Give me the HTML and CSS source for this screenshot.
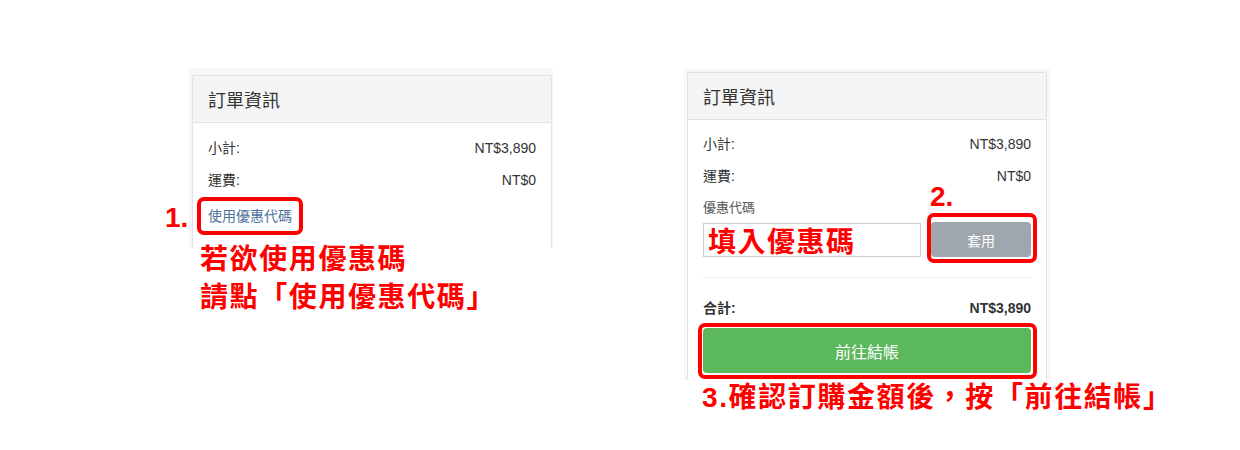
FILE: index.html
```html
<!DOCTYPE html>
<html lang="zh-Hant">
<head>
<meta charset="utf-8">
<title>訂單資訊</title>
<link rel="stylesheet" href="styles.css">
</head>
<body>
<div class="page">
  <div class="shot shot-left">
    <div class="frame frame-left">
      <div class="panel">
        <div class="panel-heading">訂單資訊</div>
        <div class="panel-body">
          <div class="row"><span>小計:</span><span>NT$3,890</span></div>
          <div class="row"><span>運費:</span><span>NT$0</span></div>
          <a class="coupon-link">使用優惠代碼</a>
        </div>
      </div>
    </div>
    <div class="note note-left">若欲使用優惠碼<br>請點「使用優惠代碼」</div>
    <span class="marker marker-1">1.</span>
    <div class="hl hl-1"></div>
  </div>

  <div class="shot shot-right">
    <div class="frame frame-right">
      <div class="panel">
        <div class="panel-heading">訂單資訊</div>
        <div class="panel-body">
          <div class="row"><span>小計:</span><span>NT$3,890</span></div>
          <div class="row"><span>運費:</span><span>NT$0</span></div>
          <div class="label">優惠代碼</div>
          <div class="coupon-row">
            <div class="input"><span class="input-hint">填入優惠碼</span></div>
            <button class="btn-apply">套用</button>
          </div>
          <div class="divider"></div>
          <div class="row total"><span>合計:</span><span>NT$3,890</span></div>
          <button class="btn-checkout">前往結帳</button>
        </div>
      </div>
    </div>
    <div class="note note-right">3.確認訂購金額後，按「前往結帳」</div>
    <span class="marker marker-2">2.</span>
    <div class="hl hl-2"></div>
    <div class="hl hl-3"></div>
  </div>
</div>
</body>
</html>
```

FILE: styles.css
```css
* { box-sizing: border-box; }

body {
  margin: 0;
  background: #ffffff;
  font-family: "Liberation Sans", "Noto Sans CJK TC", sans-serif;
  color: #333333;
}

.page {
  display: flex;
  align-items: flex-start;
  gap: 131px;
  padding: 68px 0 0 189px;
}

.shot {
  position: relative;
}

.shot-right {
  margin-top: 1px;
}

.frame {
  background: #f7f7f7;
  overflow: hidden;
}

.frame-left {
  width: 364px;
  height: 180px;
  padding: 7px 1px 0 3px;
}

.frame-right {
  width: 366px;
  height: 311px;
  padding: 3px 3px 0 3px;
}

.panel {
  width: 360px;
  background: #ffffff;
  border: 1px solid #e2e2e2;
  border-radius: 2px;
}

.frame-left .panel {
  min-height: 220px;
}

.panel-heading {
  height: 47px;
  display: flex;
  align-items: center;
  padding: 0 15px;
  background: #f5f5f5;
  border-bottom: 1px solid #e2e2e2;
  font-size: 18px;
  color: #333333;
}

.panel-body {
  padding: 15px 15px 20px;
  font-size: 14px;
}

.frame-right .panel-body {
  padding-top: 14px;
}

.row {
  display: flex;
  justify-content: space-between;
  line-height: 20px;
  margin-bottom: 12px;
}

.coupon-link {
  display: block;
  margin-top: 16px;
  line-height: 20px;
  color: #4d739c;
  font-size: 14px;
}

.label {
  margin-top: 0;
  line-height: 20px;
  color: #555555;
  font-size: 13px;
}

.coupon-row {
  display: flex;
  align-items: center;
  gap: 10px;
  margin-top: 4px;
}

.input {
  flex: 1;
  height: 34px;
  border: 1px solid #cccccc;
  display: flex;
  align-items: center;
  padding: 0 4px;
}

.input-hint {
  font-family: "Noto Sans CJK TC", sans-serif;
  font-weight: 700;
  font-size: 28px;
  letter-spacing: 1.5px;
  line-height: 1;
  color: #ff0000;
}

.btn-apply {
  width: 100px;
  height: 35px;
  border: none;
  border-radius: 4px;
  background: #9ea7ad;
  color: #ffffff;
  font-family: "Liberation Sans", "Noto Sans CJK TC", sans-serif;
  font-size: 14px;
}

.divider {
  height: 1px;
  background: #eeeeee;
  margin: 20px 0 20px;
}

.total {
  font-weight: 700;
  margin-bottom: 10px;
}

.btn-checkout {
  display: block;
  width: 100%;
  height: 45px;
  border: none;
  border-radius: 4px;
  background: #5cb85c;
  color: #ffffff;
  font-family: "Liberation Sans", "Noto Sans CJK TC", sans-serif;
  font-size: 16px;
}

.note {
  font-family: "Liberation Sans", "Noto Sans CJK TC", sans-serif;
  font-weight: 700;
  font-size: 28px;
  letter-spacing: 1.6px;
  color: #ff0000;
  white-space: nowrap;
}

.note-left {
  margin: -7px 0 0 11px;
  line-height: 38px;
}

.note-right {
  margin: 2px 0 0 18px;
  line-height: 32px;
}

.marker {
  position: absolute;
  font-family: "Liberation Sans", sans-serif;
  font-weight: 700;
  font-size: 28px;
  line-height: 28px;
  color: #ff0000;
}

.marker-1 { left: -24px; top: 136px; }
.marker-2 { left: 246px; top: 114px; }

.hl {
  position: absolute;
  border: 4px solid #ff0000;
  border-radius: 7px;
}

.hl-1 { left: 8px; top: 129px; width: 106px; height: 38px; }
.hl-2 { left: 243px; top: 144px; width: 110px; height: 50px; }
.hl-3 { left: 14px; top: 254px; width: 339px; height: 56px; }
```
